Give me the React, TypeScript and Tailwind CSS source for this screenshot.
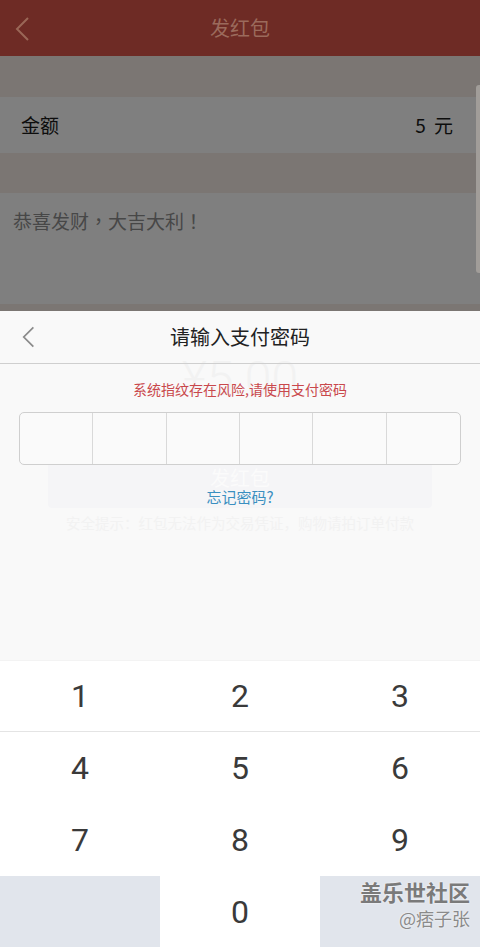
const cjk = "font-['Noto_Sans_CJK_SC','Noto_Sans',sans-serif]";

const Chevron = ({ className }: { className: string }) => (
  <svg viewBox="0 0 16 24" className={className} fill="none" stroke="currentColor" strokeWidth="2">
    <path d="M13 1 L2 12 L13 23" />
  </svg>
);

const keys = ["1", "2", "3", "4", "5", "6", "7", "8", "9"];

const App = () => {
  return (
    <div className={`relative w-[480px] h-[947px] overflow-hidden flex flex-col bg-white ${cjk}`}>
      {/* page behind the dialog, dimmed */}
      <div className="h-[56px] shrink-0 bg-[#6e2b25] relative flex items-center justify-center">
        <Chevron className="absolute left-[15px] top-[17px] w-[16px] h-[24px] text-[#9a6757]" />
        <span className="text-[20px] text-[#9b6a5c]">发红包</span>
      </div>
      <div className="h-[255px] shrink-0 bg-[#7b7673] flex flex-col pt-[41px]">
        <div className="h-[56px] bg-[#7f7f7f] flex items-center justify-between pl-[21px] pr-[25px] text-[19px] text-[#0d0d0d]">
          <span>金额</span>
          <span className="tracking-[2px]">5 元</span>
        </div>
        <div className="mt-[40px] h-[111px] bg-[#7f7f7f] pl-[13px] pt-[14px] text-[19px] text-[#474747] font-['Noto_Sans_CJK_TC','Noto_Sans_CJK_SC',sans-serif]">
          恭喜发财，大吉大利！
        </div>
      </div>

      {/* password dialog */}
      <div className="relative flex-1 bg-[#f9f9f9] flex flex-col">
        {/* bleed-through of the page underneath */}
        <div className="absolute inset-0 pointer-events-none">
          <div className="absolute left-0 right-0 top-[44px] text-center font-['Roboto',sans-serif] font-light text-[48px] leading-none text-[#f2f2f2]">
            ¥5.00
          </div>
          <div className="absolute left-[48px] right-[48px] top-[136px] h-[61px] rounded-[4px] bg-[#f5f5f7] flex items-center justify-center text-[20px] text-[#fbfbfb]">
            发红包
          </div>
          <div className="absolute left-0 right-0 top-[201px] text-center text-[14.5px] text-[#f2f2f2]">
            安全提示：红包无法作为交易凭证，购物请拍订单付款
          </div>
        </div>

        <div className="relative h-[53px] shrink-0 border-b border-[#cfcfcf] flex items-center justify-center">
          <Chevron className="absolute left-[22px] top-[15px] w-[14px] h-[22px] text-[#8a8a8a]" />
          <span className="text-[20px] text-[#222]">请输入支付密码</span>
        </div>
        <div className="relative mt-[15px] text-center text-[14px] leading-[20px] text-[#c9484c]">
          系统指纹存在风险,请使用支付密码
        </div>
        <div className="relative mx-[19px] mt-[13px] h-[53px] rounded-[5px] border border-[#cfcfcf] bg-[#fafafa] grid grid-cols-6 divide-x divide-[#d9d9d9]">
          {Array.from({ length: 6 }).map((_, i) => (
            <div key={i} />
          ))}
        </div>
        <div className="relative mt-[21px] text-center text-[15px] leading-[22px] text-[#3a8fc0]">
          忘记密码?
        </div>
      </div>

      {/* keypad */}
      <div className="h-[287px] shrink-0 bg-white border-t border-[#f3f3f3] grid grid-cols-3 grid-rows-[71px_72px_72px_71px] font-['Roboto',sans-serif] text-[32px] text-[#3a3a3a]">
        {keys.map((k, i) => (
          <div
            key={k}
            className={`flex items-center justify-center ${i < 3 ? "border-b border-[#e4e4e4]" : ""}`}
          >
            {k}
          </div>
        ))}
        <div className="bg-[#e1e5ec]" />
        <div className="flex items-center justify-center">0</div>
        <div className="bg-[#e1e5ec]" />
      </div>

      {/* scrollbar of the page behind */}
      <div className="absolute right-0 top-[85px] w-[4px] h-[188px] rounded-l-[3px] bg-[#a19d99]" />

      {/* watermark */}
      <div className="absolute right-[10px] bottom-[20px] flex flex-col items-end leading-none">
        <span className="text-[22px] font-bold text-[#7a7a7a] [text-shadow:0_0_2px_#fff]">盖乐世社区</span>
        <span className="mt-[7px] text-[18px] text-[#8a8a8a] [text-shadow:0_0_2px_#fff]">@痞子张</span>
      </div>
    </div>
  );
};

export default App;
